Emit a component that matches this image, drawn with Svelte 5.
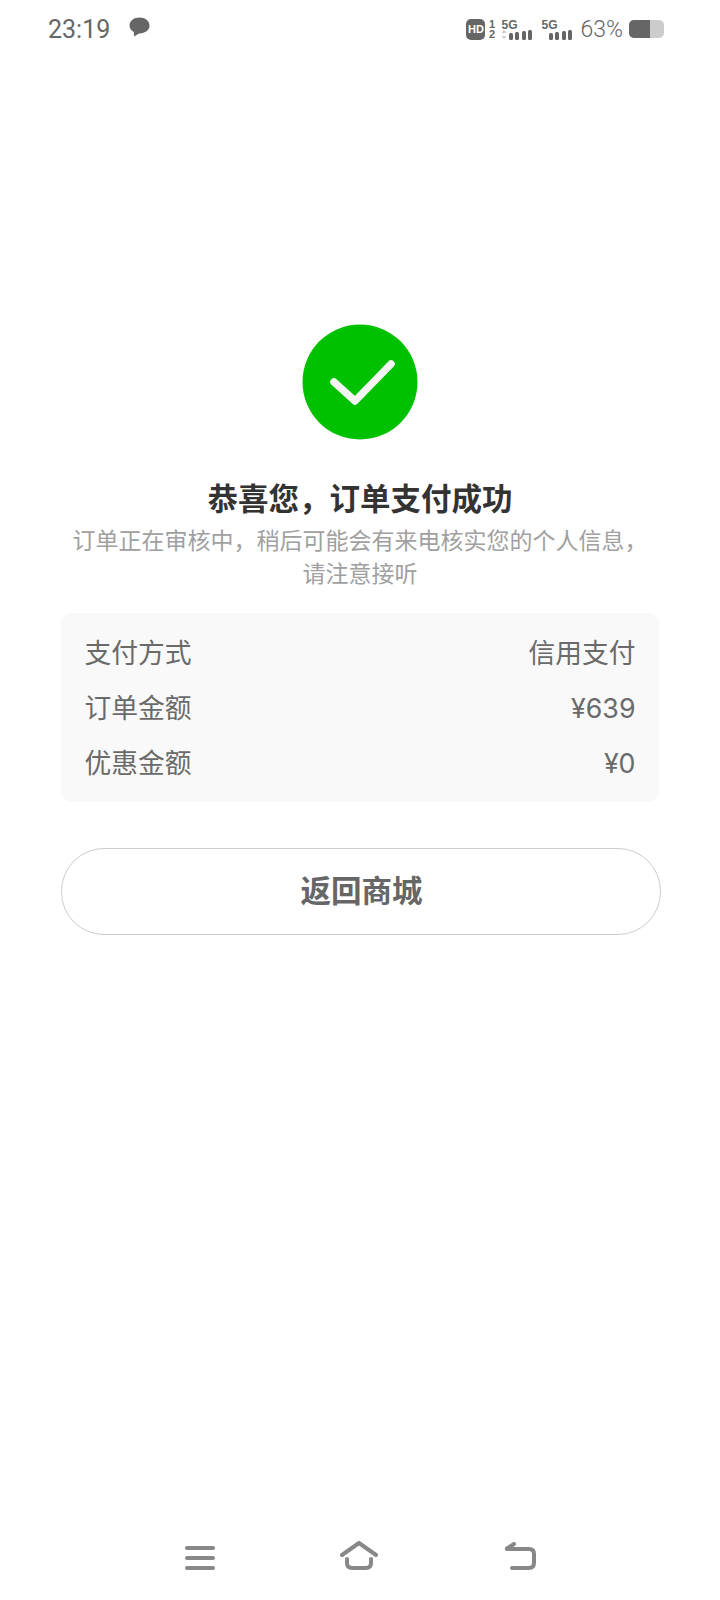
<script>
	const rows = [
		['支付方式', '信用支付'],
		['订单金额', '¥639'],
		['优惠金额', '¥0']
	]
</script>

<div class="page">
	<div class="status">
		<div class="left">
			<span class="time">23:19</span>
			<svg class="msg" width="21" height="20" viewBox="0 0 21 20">
				<path d="M10.500 0.500C4.900 0.500 0.500 3.900 0.500 8.500c0 2.800 1.700 5.200 4.300 6.600L5 19.500 10 16.400c.2 0 .4 0 .5 0 5.600 0 10-3.400 10-7.900S16.100 0.500 10.500 0.500z" fill="#666" />
			</svg>
		</div>
		<div class="right">
			<span class="hd">HD</span>
			<span class="sim">
				<b>1</b>
				<b>2</b>
			</span>
			<div class="signal">
				<span class="g">5G</span>
				<svg class="bars" width="31" height="21" viewBox="0 0 31 21">
					<path d="M3 11l2.500 3h-5zM3 20l2.500-3h-5z" fill="#ccc" />
					<rect x="8" y="14" width="4" height="7" rx="1.500" fill="#666" />
					<rect x="14" y="13" width="4" height="8" rx="1.500" fill="#666" />
					<rect x="21" y="12" width="4" height="9" rx="1.500" fill="#666" />
					<rect x="27" y="11" width="4" height="10" rx="1.500" fill="#666" />
				</svg>
			</div>
			<div class="signal">
				<span class="g">5G</span>
				<svg class="bars" width="31" height="21" viewBox="0 0 31 21">
					<rect x="8" y="14" width="4" height="7" rx="1.500" fill="#666" />
					<rect x="14" y="13" width="4" height="8" rx="1.500" fill="#666" />
					<rect x="21" y="12" width="4" height="9" rx="1.500" fill="#666" />
					<rect x="27" y="11" width="4" height="10" rx="1.500" fill="#666" />
				</svg>
			</div>
			<span class="pct">63%</span>
			<div class="battery"><div class="level"></div></div>
		</div>
	</div>

	<main>
		<svg class="ok" width="116" height="116" viewBox="0 0 116 116">
			<circle cx="58" cy="58" r="57.500" fill="#00c100" />
			<path d="M32 58 L53 77 L89 40" fill="none" stroke="#f4f4f4" stroke-width="7.500" stroke-linecap="round" stroke-linejoin="round" />
		</svg>
		<h1>恭喜您，订单支付成功</h1>
		<p>订单正在审核中，稍后可能会有来电核实您的个人信息，<br />请注意接听</p>

		<div class="card">
			{#each rows as [label, value]}
				<div class="row">
					<span>{label}</span>
					<span>{value}</span>
				</div>
			{/each}
		</div>

		<button>返回商城</button>
	</main>

	<nav>
		<svg width="30" height="24" viewBox="0 0 30 24" fill="none" stroke="#888" stroke-width="4" stroke-linecap="round">
			<path d="M2 2h26M2 12h26M2 22h26" />
		</svg>
		<svg width="38" height="29" viewBox="0 0 38 29" fill="none" stroke="#888" stroke-width="4" stroke-linecap="round" stroke-linejoin="round">
			<path d="M2 14 L19 2 L36 14" />
			<path d="M7 18v4q0 5 5 5h14q5 0 5-5v-4" />
		</svg>
		<svg width="32" height="28" viewBox="0 0 32 28" fill="none" stroke="#888" stroke-width="4" stroke-linecap="round" stroke-linejoin="round">
			<path d="M3 7h22q5 0 5 5v9q0 5-5 5H8" />
			<path d="M10 2 L3 6.500" />
		</svg>
	</nav>
</div>

<style>
	:global(body) {
		margin: 0;
		background: #fff;
	}

	.page {
		width: 720px;
		height: 1600px;
		display: flex;
		flex-direction: column;
		font-family: 'Noto Sans CJK SC', 'Roboto', sans-serif;
		overflow: hidden;
	}

	.status {
		height: 58px;
		box-sizing: border-box;
		padding: 0 56px 0 48px;
		display: flex;
		justify-content: space-between;
		align-items: center;
		color: #666;
		flex: none;
	}

	.left,
	.right {
		display: flex;
		align-items: center;
	}

	.time {
		font: 400 25px Roboto, sans-serif;
		margin-right: 19px;
	}

	.msg {
		margin-top: -4px;
	}

	.hd {
		width: 19px;
		height: 21px;
		border-radius: 5px;
		background: #666;
		color: #fff;
		font: bold 11px/21px 'Liberation Sans', sans-serif;
		text-align: center;
	}

	.sim {
		display: flex;
		flex-direction: column;
		width: 7px;
		margin: 0 6px 0 3px;
		font: 11px/10.500px 'Liberation Sans', sans-serif;
	}

	.sim b {
		text-align: center;
	}

	.signal {
		position: relative;
		width: 31px;
		height: 21px;
		margin-right: 9px;
	}

	.g {
		position: absolute;
		left: 0;
		top: 1px;
		font: bold 12px/10px 'Liberation Sans', sans-serif;
	}

	.bars {
		position: absolute;
		right: 0;
		top: 0;
	}

	.pct {
		font: 300 23px Roboto, sans-serif;
		margin: 0 6px 0 -1px;
	}

	.battery {
		width: 35px;
		height: 18px;
		border-radius: 5px;
		background: #ccc;
		overflow: hidden;
	}

	.level {
		width: 21px;
		height: 18px;
		background: #666;
	}

	main {
		flex: 1;
		display: flex;
		flex-direction: column;
		align-items: center;
		padding-top: 266px;
	}

	.ok {
		display: block;
		margin-left: 0.500px;
	}

	h1 {
		margin: 32px 0 0;
		font-size: 30.500px;
		line-height: 51px;
		font-weight: 700;
		color: #333;
	}

	p {
		margin: 0;
		font-size: 23px;
		line-height: 33px;
		color: #a0a0a0;
		text-align: center;
	}

	.card {
		width: 598px;
		height: 189px;
		box-sizing: border-box;
		margin: 24px 0 0 -1px;
		padding: 13px 23px 8px 24px;
		background: #f9f9f9;
		border-radius: 10px;
		font-family: Inter, 'Noto Sans CJK SC', sans-serif;
		font-size: 26.750px;
		line-height: 55px;
		color: #6a6a6a;
	}

	.row {
		display: flex;
		justify-content: space-between;
	}

	button {
		width: 600px;
		height: 87px;
		margin: 46px 0 0 1px;
		padding: 0 0 6px 2px;
		background: #fff;
		border: 1px solid #ccc;
		border-radius: 43px;
		font-family: inherit;
		font-size: 30.500px;
		font-weight: 700;
		color: #666;
	}

	nav {
		flex: none;
		height: 84px;
		padding-bottom: 30px;
		box-sizing: border-box;
		display: flex;
		justify-content: center;
		align-items: flex-end;
		gap: 125.500px;
	}
</style>
